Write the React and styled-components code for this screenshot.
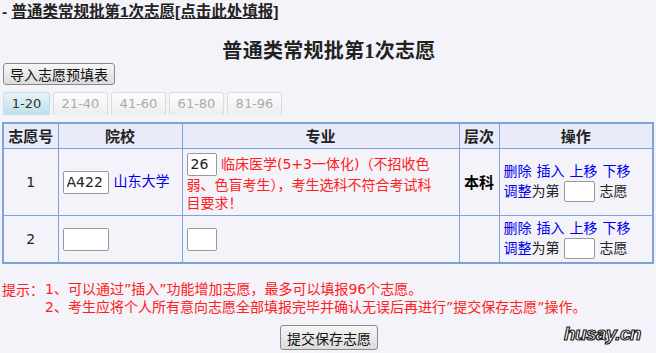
import React from "react";
import styled, { createGlobalStyle } from "styled-components";

const Global = createGlobalStyle`
  html, body { margin: 0; padding: 0; background: #f3f3f9; }
  body { font-family: "DejaVu Sans", "Noto Sans CJK SC", sans-serif; font-size: 14px; color: #222; }
`;

const Page = styled.div`
  position: relative;
  width: 656px;
  height: 353px;
  overflow: hidden;
  padding: 3px 0 0 2px;
  box-sizing: border-box;
`;

const TopLine = styled.div`
  height: 18px;
  line-height: 18px;
  font-weight: bold;
  font-size: 15.5px;
  color: #222;
  font-family: "Liberation Sans", "Noto Sans CJK SC", sans-serif;
  a { color: #222; text-decoration: underline; }
`;

const Title = styled.h1`
  margin: 18px 0 0;
  height: 24px;
  line-height: 24px;
  text-align: center;
  font-size: 20px;
  font-weight: bold;
  font-family: "Liberation Serif", "Noto Sans CJK SC", serif;
  color: #222;
  letter-spacing: 0.3px;
`;

const Btn = styled.button`
  display: block;
  margin: ${p => p.$center ? "9px auto 0" : "0 0 0 1px"};
  height: ${p => p.$center ? "25px" : "22px"};
  padding: 0 6px;
  font-family: "Noto Sans CJK SC", sans-serif;
  font-size: 14px;
  line-height: 18px;
  color: #111;
  background: linear-gradient(#f6f6f6, #dcdcdc);
  border: 1px solid #8a8a8a;
  border-radius: 3px;
`;

const Tabs = styled.div`
  display: flex;
  gap: 3px;
  margin: 7px 0 0 1px;
  height: 23px;
`;

const Tab = styled.div`
  width: ${p => p.$active ? "45px" : "53px"};
  height: 22px;
  line-height: 22px;
  text-align: center;
  color: ${p => p.$active ? "#333" : "#aaa"};
  border: 1px solid ${p => p.$active ? "#c6dde6" : "#dcdcdc"};
  border-bottom: none;
  border-radius: 3px 3px 0 0;
  background: ${p => p.$active ? "linear-gradient(#e6f3f7, #bfdfea)" : "linear-gradient(#fdfdfd, #ededed)"};
  font-family: "DejaVu Sans", sans-serif;
  font-size: 13px;
`;

const Table = styled.table`
  margin-top: 7px;
  width: 650px;
  table-layout: fixed;
  border-collapse: collapse;
  border: 2px solid #7ba4dc;
`;

const Th = styled.th`
  height: 24px;
  padding: 0;
  background: #e9ebf9;
  border: 1px solid #7ba4dc;
  font-size: 15px;
  font-weight: bold;
  color: #222;
  text-align: center;
  font-family: "Noto Sans CJK SC", sans-serif;
  line-height: 20px;
`;

const Tr = styled.tr`
  height: ${p => p.$h}px;
`;

const Td = styled.td`
  border: 1px solid #7ba4dc;
  padding: 3px ${p => p.$pr || 4}px 3px 4px;
  text-align: ${p => p.$align || "left"};
  vertical-align: middle;
  line-height: 18px;
  font-weight: ${p => p.$bold ? "bold" : "normal"};
  color: ${p => p.$bold ? "#000" : "#222"};
  font-size: ${p => p.$bold ? "15px" : "14px"};
  font-family: ${p => p.$bold ? "\"Noto Sans CJK SC\", sans-serif" : "inherit"};
`;

const Input = styled.input`
  width: ${p => p.$w}px;
  height: ${p => p.$h || 23}px;
  box-sizing: border-box;
  padding: 0 3px;
  border: 1px solid #999;
  border-radius: 2px;
  background: #fff;
  font-family: "DejaVu Sans", sans-serif;
  font-size: 14px;
  color: #222;
  vertical-align: middle;
`;

const School = styled.span`
  color: #0000ee;
  margin-left: 5px;
`;

const Red = styled.span`
  color: #ff2020;
`;

const Link = styled.a`
  color: #0000ee;
  text-decoration: none;
`;

const OpLine = styled.div`
  line-height: 19px;
  white-space: nowrap;
  display: flex;
  align-items: center;
  gap: ${p => p.$gap || 0}px;
`;

const Hints = styled.div`
  margin-top: 16px;
  display: flex;
  color: #ff2020;
  font-size: 14px;
  line-height: 18px;
`;

const HintLabel = styled.div`
  width: 43px;
  flex: none;
  font-family: "Noto Sans CJK SC", sans-serif;
`;

const Mark = styled.div`
  position: absolute;
  left: 564px;
  top: 323px;
  font-family: "Liberation Sans", sans-serif;
  font-weight: bold;
  font-style: italic;
  font-size: 19px;
  color: #fff;
  -webkit-text-stroke: 1.2px #222;
  letter-spacing: -0.6px;
`;

function Ops() {
  return (
    <Td>
      <OpLine $gap={5}>
        <Link href="#">删除</Link>
        <Link href="#">插入</Link>
        <Link href="#">上移</Link>
        <Link href="#">下移</Link>
      </OpLine>
      <OpLine>
        <Link href="#">调整</Link>为第&nbsp;<Input $w={31} $h={21} />&nbsp;志愿
      </OpLine>
    </Td>
  );
}

export default function App() {
  return (
    <>
      <Global />
      <Page>
        <TopLine>- <a href="#">普通类常规批第1次志愿[点击此处填报]</a></TopLine>
        <Title>普通类常规批第1次志愿</Title>
        <Btn>导入志愿预填表</Btn>
        <Tabs>
          <Tab $active>1-20</Tab>
          <Tab>21-40</Tab>
          <Tab>41-60</Tab>
          <Tab>61-80</Tab>
          <Tab>81-96</Tab>
        </Tabs>
        <Table>
          <colgroup>
            <col style={{ width: 55 }} />
            <col style={{ width: 124 }} />
            <col style={{ width: 277 }} />
            <col style={{ width: 40 }} />
            <col style={{ width: 154 }} />
          </colgroup>
          <thead>
            <tr>
              <Th>志愿号</Th>
              <Th>院校</Th>
              <Th>专业</Th>
              <Th>层次</Th>
              <Th>操作</Th>
            </tr>
          </thead>
          <tbody>
            <Tr $h={67}>
              <Td $align="center">1</Td>
              <Td><Input $w={46} defaultValue="A422" /><School>山东大学</School></Td>
              <Td $pr={14}><Input $w={30} defaultValue="26" /> <Red>临床医学(5+3一体化)（不招收色弱、色盲考生），考生选科不符合考试科目要求！</Red></Td>
              <Td $align="center" $bold>本科</Td>
              <Ops />
            </Tr>
            <Tr $h={47}>
              <Td $align="center">2</Td>
              <Td><Input $w={46} /></Td>
              <Td><Input $w={30} /></Td>
              <Td />
              <Ops />
            </Tr>
          </tbody>
        </Table>
        <Hints>
          <HintLabel>提示：</HintLabel>
          <div>
            <div>1、可以通过”插入”功能增加志愿，最多可以填报96个志愿。</div>
            <div>2、考生应将个人所有意向志愿全部填报完毕并确认无误后再进行”提交保存志愿”操作。</div>
          </div>
        </Hints>
        <Btn $center>提交保存志愿</Btn>
        <Mark>husay.cn</Mark>
      </Page>
    </>
  );
}
